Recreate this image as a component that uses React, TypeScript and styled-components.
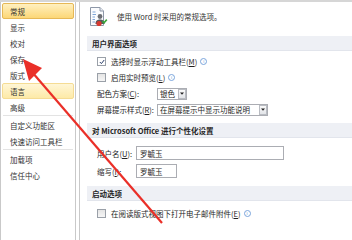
import React, { FunctionComponent } from 'react'
import styled, { createGlobalStyle } from 'styled-components'

const GlobalStyle = createGlobalStyle`
	html, body {
		margin: 0;
		padding: 0;
		background: #ffffff;
	}
	body {
		font-family: 'Noto Sans CJK SC', 'Noto Sans', sans-serif;
		font-size: 7.5px;
		color: #1e1e1e;
	}
`

const Window = styled.div`
	position: relative;
	width: 352px;
	height: 240px;
	overflow: hidden;
	border-top: 2px solid #d6d6d6;
	box-sizing: border-box;
	display: flex;
	background: #ffffff;
`

const Sidebar = styled.div`
	width: 76px;
	box-sizing: border-box;
	border-left: 1px solid #c9c9c9;
	border-right: 1px solid #c9c9c9;
	padding-top: 1px;
	display: flex;
	flex-direction: column;
	background: #ffffff;
`

const NavItem = styled.div<{ $selected?: boolean; $hover?: boolean }>`
	height: 16px;
	margin: 0 1px;
	padding-left: 7px;
	box-sizing: border-box;
	display: flex;
	align-items: center;
	border-radius: 2px;
	border: 1px solid transparent;
	color: #333333;
	${(p) =>
		p.$selected &&
		`
		background: linear-gradient(#fff0c0, #fcd777);
		border-color: #e6b856;
	`}
	${(p) =>
		p.$hover &&
		`
		background: linear-gradient(#fff6d6, #fdeaa8);
		border-color: #f5dc94;
	`}
`

const NavSeparator = styled.div`
	height: 2px;
	margin: 0 2px;
	border-top: 1px solid #e3e3e3;
	box-sizing: border-box;
`

const Gap = styled.div`
	width: 3px;
	background: #ffffff;
`

const Panel = styled.div`
	flex: 1;
	border-left: 1px solid #c9c9c9;
	display: flex;
	flex-direction: column;
`

const Intro = styled.div`
	height: 29px;
	padding-left: 8px;
	display: flex;
	align-items: center;
	gap: 9px;
	color: #333333;
`

const SectionHeader = styled.div<{ $top: number }>`
	margin-top: ${(p) => p.$top}px;
	margin-left: 7px;
	height: 15px;
	padding-left: 5px;
	box-sizing: border-box;
	display: flex;
	align-items: center;
	background: #eef0f5;
	border-bottom: 1px solid #e2e5ec;
	font-weight: bold;
	color: #262626;
`

const Section = styled.div<{ $top: number; $gap: number }>`
	padding: ${(p) => p.$top}px 0 0 17px;
	display: flex;
	flex-direction: column;
	gap: ${(p) => p.$gap}px;
`

const Row = styled.div<{ $height?: number }>`
	height: ${(p) => p.$height ?? 15}px;
	display: flex;
	align-items: center;
`

const Box = styled.span<{ $checked?: boolean }>`
	width: 7px;
	height: 7px;
	margin-right: 5px;
	border: 1px solid #9aa0a8;
	background: ${(p) => (p.$checked ? '#ffffff' : 'linear-gradient(#e4e4e4, #f6f6f6)')};
	display: flex;
	align-items: center;
	justify-content: center;
`

const Label = styled.span<{ $width: number }>`
	width: ${(p) => p.$width}px;
	flex-shrink: 0;
`

const Select = styled.div<{ $width: number }>`
	width: ${(p) => p.$width}px;
	height: 12px;
	box-sizing: border-box;
	border: 1px solid #abadb3;
	background: #ffffff;
	display: flex;
	align-items: center;
	padding-left: 2px;
`

const SelectText = styled.span`
	flex: 1;
	white-space: nowrap;
`

const SelectButton = styled.span`
	width: 8px;
	height: 10px;
	box-sizing: border-box;
	border: 1px solid #b9bcc2;
	background: linear-gradient(#fafafa, #e2e4e8);
	display: flex;
	align-items: center;
	justify-content: center;
`

const Input = styled.div<{ $width: number }>`
	width: ${(p) => p.$width}px;
	height: 14px;
	box-sizing: border-box;
	border: 1px solid #abadb3;
	background: #ffffff;
	display: flex;
	align-items: center;
	padding-left: 3px;
`

const Info = styled.span`
	width: 5px;
	height: 5px;
	margin-left: 3px;
	border-radius: 50%;
	border: 1px solid #7aa5dc;
	color: #5a8ed2;
	font-size: 4px;
	line-height: 5px;
	text-align: center;
	font-family: 'DejaVu Sans', sans-serif;
`

const Overlay = styled.svg`
	position: absolute;
	left: 0;
	top: -2px;
	pointer-events: none;
`

const Check: FunctionComponent = () => (
	<svg width="6" height="6" viewBox="0 0 6 6">
		<path d="M0.8 3 L2.4 4.6 L5.2 1" fill="none" stroke="#2b3e6a" strokeWidth="1" />
	</svg>
)

const Arrow: FunctionComponent = () => (
	<svg width="4" height="3" viewBox="0 0 4 3">
		<path d="M0 0.5 H4 L2 2.7 Z" fill="#222" />
	</svg>
)

const OptionsIcon: FunctionComponent = () => (
	<svg width="20" height="20" viewBox="0 0 20 20">
		<path d="M2.5 0.5 H12 L15.5 4 V18.5 H2.5 Z" fill="#fbfcfe" stroke="#8e98a8" />
		<path d="M12 0.5 V4 H15.5" fill="#e8ecf2" stroke="#8e98a8" />
		<path d="M4.5 5 H7.5 M4.5 7.5 H8 M4.5 10 H7 M4.5 12.5 H7 M4.5 15 H7" stroke="#7fa6d8" />
		<circle cx="12" cy="9.5" r="2.4" fill="#6d6f74" />
		<path d="M7.5 17 C7.5 13.5 9.5 12.5 12 12.5 C14.5 12.5 16.5 13.5 16.5 17 Z" fill="#55575c" />
		<circle cx="11" cy="16.5" r="2.6" fill="#d8392f" />
		<path d="M14.5 14 L16 15.8 L18.8 12.6" fill="none" stroke="#3aa53a" strokeWidth="1.6" />
	</svg>
)

const navTop = ['常规', '显示', '校对', '保存', '版式', '语言', '高级']

export default function App() {
	return (
		<>
			<GlobalStyle />
			<Window>
				<Sidebar>
					{navTop.map((name, i) => (
						<NavItem key={name} $selected={i === 0} $hover={name === '语言'}>
							{name}
						</NavItem>
					))}
					<NavSeparator />
					<NavItem>自定义功能区</NavItem>
					<NavItem>快速访问工具栏</NavItem>
					<NavSeparator />
					<NavItem>加载项</NavItem>
					<NavItem>信任中心</NavItem>
				</Sidebar>
				<Gap />
				<Panel>
					<Intro>
						<OptionsIcon />
						<span>使用 Word 时采用的常规选项。</span>
					</Intro>

					<SectionHeader $top={5}>用户界面选项</SectionHeader>
					<Section $top={3} $gap={1}>
						<Row>
							<Box $checked>
								<Check />
							</Box>
							<span>
								选择时显示浮动工具栏(<u>M</u>)
							</span>
							<Info>i</Info>
						</Row>
						<Row>
							<Box />
							<span>
								启用实时预览(<u>L</u>)
							</span>
							<Info>i</Info>
						</Row>
						<Row>
							<Label $width={60}>
								配色方案(<u>C</u>):
							</Label>
							<Select $width={30}>
								<SelectText>银色</SelectText>
								<SelectButton>
									<Arrow />
								</SelectButton>
							</Select>
						</Row>
						<Row>
							<Label $width={60}>
								屏幕提示样式(<u>R</u>):
							</Label>
							<Select $width={111}>
								<SelectText>在屏幕提示中显示功能说明</SelectText>
								<SelectButton>
									<Arrow />
								</SelectButton>
							</Select>
						</Row>
					</Section>

					<SectionHeader $top={6}>对 Microsoft Office 进行个性化设置</SectionHeader>
					<Section $top={7} $gap={2}>
						<Row $height={16}>
							<Label $width={39}>
								用户名(<u>U</u>):
							</Label>
							<Input $width={148}>罗毓玉</Input>
						</Row>
						<Row $height={16}>
							<Label $width={39}>
								缩写(<u>I</u>):
							</Label>
							<Input $width={41}>罗毓玉</Input>
						</Row>
					</Section>

					<SectionHeader $top={7}>启动选项</SectionHeader>
					<Section $top={5} $gap={0}>
						<Row>
							<Box />
							<span>
								在阅读版式视图下打开电子邮件附件(<u>E</u>)
							</span>
							<Info>i</Info>
						</Row>
					</Section>
				</Panel>

				<Overlay width="352" height="240" viewBox="0 0 352 240">
					<line x1="162" y1="223" x2="32" y2="72" stroke="#ea2f28" strokeWidth="2.2" />
					<path d="M23 59 L42 68 L29 81 Z" fill="#ea2f28" />
				</Overlay>
			</Window>
		</>
	)
}
